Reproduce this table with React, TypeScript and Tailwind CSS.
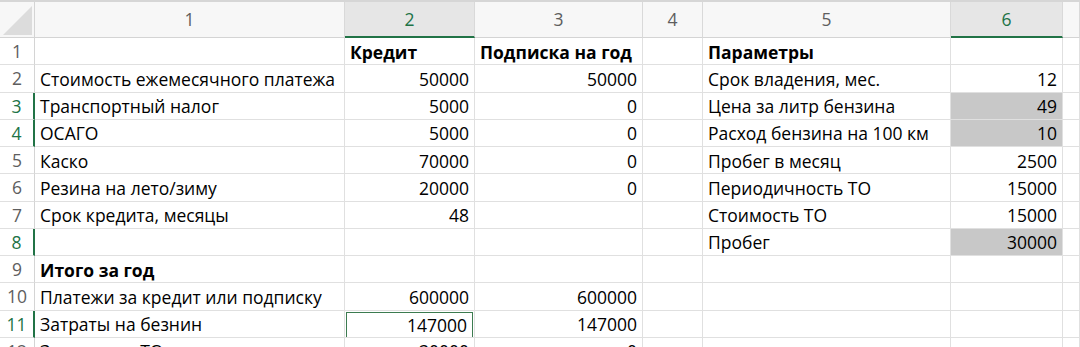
const GRID = "grid grid-cols-[35px_310px_130px_168px_60px_248px_112px_1fr]";

type Row = {
  cells: string[];
  bold?: boolean;
  gray?: number[];
  active?: number;
  picked?: boolean;
};

const rows: Row[] = [
  { cells: ["", "Кредит", "Подписка на год", "", "Параметры", ""], bold: true },
  { cells: ["Стоимость ежемесячного платежа", "50000", "50000", "", "Срок владения, мес.", "12"] },
  { cells: ["Транспортный налог", "5000", "0", "", "Цена за литр бензина", "49"], gray: [5], picked: true },
  { cells: ["ОСАГО", "5000", "0", "", "Расход бензина на 100 км", "10"], gray: [5], picked: true },
  { cells: ["Каско", "70000", "0", "", "Пробег в месяц", "2500"] },
  { cells: ["Резина на лето/зиму", "20000", "0", "", "Периодичность ТО", "15000"] },
  { cells: ["Срок кредита, месяцы", "48", "", "", "Стоимость ТО", "15000"] },
  { cells: ["", "", "", "", "Пробег", "30000"], gray: [5], picked: true },
  { cells: ["Итого за год", "", "", "", "", ""], bold: true },
  { cells: ["Платежи за кредит или подписку", "600000", "600000", "", "", ""] },
  { cells: ["Затраты на безнин", "147000", "147000", "", "", ""], active: 1, picked: true },
  { cells: ["Затраты на ТО", "30000", "0", "", "", ""] },
];

const numeric = (s: string) => /^\d+$/.test(s);

function Corner() {
  return (
    <div className="border-r border-b border-[#d4d4d4] bg-[#f7f7f7] flex items-end justify-end p-[2px]">
      <svg width="30" height="30" viewBox="0 0 30 30">
        <polygon points="1,30 30,1 30,30" fill="#dcdcdc" />
      </svg>
    </div>
  );
}

export default function App() {
  const headers = ["1", "2", "3", "4", "5", "6", ""];
  const pickedCols = [1, 5];

  return (
    <div
      className="w-[1080px] h-[347px] overflow-hidden bg-white text-black"
      style={{ fontFamily: '"Open Sans", "Noto Sans", sans-serif' }}
    >
      <div className="h-[2px] bg-[#d6d6d6]" />
      <div className={`${GRID} h-[36px]`}>
        <Corner />
        {headers.map((h, i) => {
          const on = pickedCols.includes(i);
          return (
            <div
              key={i}
              className={`flex items-center justify-center border-r border-[#d9d9d9] text-[17.5px] ${
                on
                  ? "bg-[#e6e6e6] text-[#217346] border-b-2 border-b-[#217346]"
                  : "bg-[#f7f7f7] text-[#5e5e5e] border-b border-b-[#d4d4d4]"
              }`}
            >
              {h}
            </div>
          );
        })}
      </div>
      {rows.map((r, ri) => (
        <div key={ri} className={`${GRID} h-[27.25px]`}>
          <div
            className={`flex items-center justify-center border-b border-[#e0e0e0] text-[17.5px] ${
              r.picked
                ? "text-[#217346] border-r-2 border-r-[#217346]"
                : "text-[#5e5e5e] border-r border-r-[#d4d4d4]"
            }`}
          >
            {ri + 1}
          </div>
          {[...r.cells, ""].map((c, ci) => {
            const gray = r.gray?.includes(ci);
            const active = r.active === ci;
            return (
              <div
                key={ci}
                className={`border-r border-b border-[#e0e0e0] overflow-hidden whitespace-nowrap ${
                  gray ? "bg-[#c8c8c8] border-[#dcdcdc]" : ""
                }`}
              >
                <div
                  className={`h-full flex items-center px-[5px] pt-[1px] text-[17.5px] ${
                    numeric(c) ? "justify-end" : "justify-start"
                  } ${r.bold ? "font-bold" : ""} ${
                    active ? "border border-[#3c7b50] m-[1px] h-[calc(100%-2px)] px-[3px]" : ""
                  }`}
                >
                  {c}
                </div>
              </div>
            );
          })}
        </div>
      ))}
    </div>
  );
}
